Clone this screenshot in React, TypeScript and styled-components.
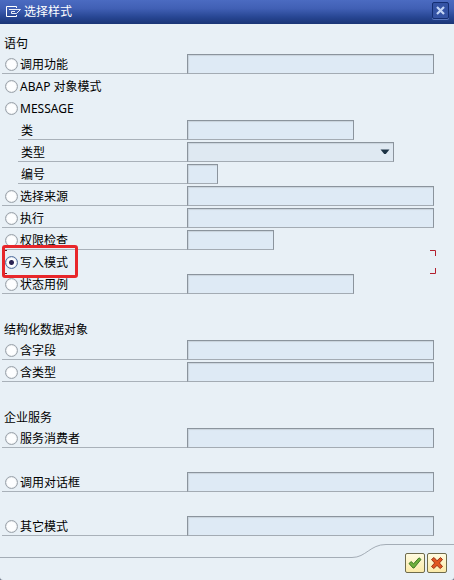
import React, { useState } from 'react';
import styled, { createGlobalStyle, css } from 'styled-components';

const GlobalStyle = createGlobalStyle`
  * {
    box-sizing: border-box;
  }

  body {
    margin: 0;
    background: #6d7686;
  }

  body, input, select, button {
    font-family: "Noto Sans", "Noto Sans CJK SC", sans-serif;
    font-size: 12px;
    line-height: 18px;
    color: #000;
  }
`;

const Dialog = styled.form`
  display: flex;
  flex-direction: column;
  min-height: 100vh;
  background: #e8f0f6;
  border-radius: 0 0 3px 3px;
`;

const TitleBar = styled.header`
  display: flex;
  align-items: center;
  gap: 2px;
  height: 24px;
  padding: 0 5px;
  background: linear-gradient(#4b6bc1 0%, #4160b5 35%, #284794 70%, #1a3576 100%);
`;

const Title = styled.h1`
  flex: 1;
  margin: 0;
  font-size: 12px;
  font-weight: 400;
  line-height: 20px;
  color: #fff;
`;

const CloseButton = styled.button`
  display: flex;
  align-items: center;
  justify-content: center;
  width: 17px;
  height: 17px;
  margin: 0 0 4px;
  padding: 0;
  border: 1px solid #142e72;
  border-radius: 2px;
  background: #3453a4;
  box-shadow: 0 1px 0 #5876bd;
`;

const Content = styled.main`
  flex: 1;
  padding: 6px 20px 8px 2px;
`;

const Group = styled.fieldset`
  min-width: 0;
  margin: 0 0 22px;
  padding: 0;
  border: 0;

  &:last-child {
    margin-bottom: 0;
  }
`;

const GroupTitle = styled.legend`
  height: 22px;
  padding: 5px 2px 0;
  line-height: 17px;
`;

const Row = styled.div`
  position: relative;
  display: flex;
  align-items: flex-end;
  height: 22px;
`;

const LabelCell = styled.div<{ $indent?: boolean; $ruled?: boolean }>`
  display: flex;
  align-items: flex-start;
  flex: none;
  width: ${(p) => (p.$indent ? 169 : 185)}px;
  height: 22px;
  margin-left: ${(p) => (p.$indent ? 16 : 0)}px;
  padding: 4px 0 0 ${(p) => (p.$indent ? 3 : 0)}px;
  border-bottom: 1px solid ${(p) => (p.$ruled ? '#a9b1b9' : 'transparent')};
`;

const ChoiceLabel = styled.label`
  display: flex;
  align-items: flex-start;
  gap: 2px;
  padding-left: 3px;
  white-space: nowrap;
`;

const Radio = styled.input`
  appearance: none;
  flex: none;
  width: 13px;
  height: 13px;
  margin: 2px 0 0;
  border: 1px solid #9aa2aa;
  border-radius: 50%;
  background: #fdfeff;
  box-shadow: inset 0 0 1px #9aa2aa;

  &:checked {
    border-color: #54719f;
    background: radial-gradient(circle, #2a2352 0 2px, #fdfeff 3px);
    box-shadow: inset 0 0 1px #54719f;
  }
`;

const fieldLook = css`
  height: 20px;
  margin: 0;
  padding: 0 4px;
  border: 1px solid #8b949d;
  border-bottom-color: #a3abb3;
  border-radius: 0;
  background: #deeaf5;
  box-shadow: inset 1px 1px 1px #c9d3dc;
  outline: none;
`;

const TextField = styled.input<{ $width?: number }>`
  ${fieldLook}
  min-width: 0;
  ${(p) => (p.$width ? `width: ${p.$width}px;` : 'flex: 1;')}
`;

const SelectBox = styled.div`
  position: relative;
  display: flex;
  width: 207px;

  svg {
    position: absolute;
    top: 7px;
    right: 4px;
    pointer-events: none;
  }
`;

const Select = styled.select`
  ${fieldLook}
  appearance: none;
  flex: 1;
  background: #dfe9f2;
`;

const FocusMarks = styled.svg<{ $side: 'left' | 'right' }>`
  position: absolute;
  top: 0;
  ${(p) => (p.$side === 'left' ? 'left: 2px;' : 'right: -2px;')}
  pointer-events: none;
`;

const Highlight = styled.div`
  position: absolute;
  top: -5px;
  left: 0;
  width: 76px;
  height: 33px;
  border: 3px solid #e8262a;
  border-radius: 3px;
  pointer-events: none;
`;

const Footer = styled.footer`
  display: flex;
  height: 36px;
`;

const FooterEdge = styled.div`
  flex: 1;
  margin-top: 13px;
  border-top: 1px solid #a4adb6;
`;

const FooterCurve = styled.svg`
  flex: none;
`;

const Actions = styled.div`
  display: flex;
  gap: 2px;
  padding: 8px 7px 0 19px;
  border-top: 1px solid #a4adb6;
`;

const ActionButton = styled.button`
  display: flex;
  align-items: center;
  justify-content: center;
  width: 20px;
  height: 20px;
  padding: 0;
  border: 1px solid #6f6b4c;
  border-radius: 2px;
  background: linear-gradient(#fffbe0, #fbeaa8);
`;

type Item = {
  id: string;
  label: string;
  choice?: boolean;
  field?: 'text' | 'select';
  width?: number;
};

const statements: Item[] = [
  { id: 'function', label: '调用功能', choice: true, field: 'text' },
  { id: 'object', label: 'ABAP 对象模式', choice: true },
  { id: 'message', label: 'MESSAGE', choice: true },
  { id: 'class', label: '类', field: 'text', width: 167 },
  { id: 'type', label: '类型', field: 'select' },
  { id: 'number', label: '编号', field: 'text', width: 31 },
  { id: 'select', label: '选择来源', choice: true, field: 'text' },
  { id: 'perform', label: '执行', choice: true, field: 'text' },
  { id: 'authority', label: '权限检查', choice: true, field: 'text', width: 87 },
  { id: 'write', label: '写入模式', choice: true },
  { id: 'case', label: '状态用例', choice: true, field: 'text', width: 167 },
];

const structures: Item[] = [
  { id: 'fields', label: '含字段', choice: true, field: 'text' },
  { id: 'types', label: '含类型', choice: true, field: 'text' },
];

const services: Item[] = [
  { id: 'consumer', label: '服务消费者', choice: true, field: 'text' },
];

const dialogs: Item[] = [
  { id: 'dialog', label: '调用对话框', choice: true, field: 'text' },
];

const others: Item[] = [
  { id: 'other', label: '其它模式', choice: true, field: 'text' },
];

export default function App() {
  const [selected, setSelected] = useState('write');

  const renderItem = (item: Item) => (
    <Row key={item.id}>
      <LabelCell $indent={!item.choice} $ruled={!!item.field}>
        {item.choice ? (
          <ChoiceLabel>
            <Radio
              type="radio"
              name="pattern"
              value={item.id}
              checked={selected === item.id}
              onChange={() => setSelected(item.id)}
            />
            {item.label}
          </ChoiceLabel>
        ) : (
          <label htmlFor={`field-${item.id}`}>{item.label}</label>
        )}
      </LabelCell>
      {item.field === 'text' && (
        <TextField
          id={`field-${item.id}`}
          type="text"
          aria-label={item.label}
          $width={item.width}
        />
      )}
      {item.field === 'select' && (
        <SelectBox>
          <Select id={`field-${item.id}`} defaultValue="">
            <option value="" />
          </Select>
          <svg width="10" height="6" viewBox="0 0 10 6" aria-hidden="true">
            <path d="M0.5 0.5h9L5.8 5H4.2z" fill="#1d3345" />
          </svg>
        </SelectBox>
      )}
      {item.id === 'write' && (
        <>
          <FocusMarks $side="left" width="3" height="24" viewBox="0 0 3 24" aria-hidden="true">
            <path d="M0 0.5H3M0 23.5H3" fill="none" stroke="#6b1a22" />
          </FocusMarks>
          <FocusMarks $side="right" width="6" height="24" viewBox="0 0 6 24" aria-hidden="true">
            <path d="M0 0.5H5.5V6M5.5 18V23.5H0" fill="none" stroke="#b3202e" />
          </FocusMarks>
          <Highlight />
        </>
      )}
    </Row>
  );

  return (
    <>
      <GlobalStyle />
      <Dialog onSubmit={(e) => e.preventDefault()}>
        <TitleBar>
          <svg width="17" height="14" viewBox="0 0 17 14" fill="none" stroke="#fff" aria-hidden="true">
            <path d="M11.5 3V1.5H1.5V11.5H11.5V10" />
            <path d="M4 4.5H15.5L11.5 8.5H6.5V6.5H10" strokeWidth="0.9" />
          </svg>
          <Title>选择样式</Title>
          <CloseButton type="button" aria-label="关闭">
            <svg width="9" height="9" viewBox="0 0 9 9" aria-hidden="true">
              <path d="M1 1L8 8M8 1L1 8" stroke="#c3d5f6" strokeWidth="2.2" />
            </svg>
          </CloseButton>
        </TitleBar>
        <Content>
          <Group>
            <GroupTitle>语句</GroupTitle>
            {statements.map(renderItem)}
          </Group>
          <Group>
            <GroupTitle>结构化数据对象</GroupTitle>
            {structures.map(renderItem)}
          </Group>
          <Group>
            <GroupTitle>企业服务</GroupTitle>
            {services.map(renderItem)}
          </Group>
          <Group>{dialogs.map(renderItem)}</Group>
          <Group>{others.map(renderItem)}</Group>
        </Content>
        <Footer>
          <FooterEdge />
          <FooterCurve width="34" height="14" viewBox="0 0 34 14" aria-hidden="true">
            <path d="M0 13.5C14 13.5 18 0.5 34 0.5" fill="none" stroke="#a4adb6" />
          </FooterCurve>
          <Actions>
            <ActionButton type="submit" aria-label="继续">
              <svg width="14" height="14" viewBox="0 0 14 14" aria-hidden="true">
                <path
                  d="M1 7.5L3.2 5.6L5.6 7.8L11 1.8L13 3.4L6 12H5Z"
                  fill="#6fb03c"
                  stroke="#3f7a25"
                  strokeLinejoin="round"
                />
              </svg>
            </ActionButton>
            <ActionButton type="button" aria-label="取消">
              <svg width="14" height="14" viewBox="0 0 14 14" aria-hidden="true">
                <path
                  d="M1.5 3.5L4 1.5L7 4.8L10.5 1.5L12.5 3.5L9.4 7L12.5 10.5L10.2 12.5L7 9.4L3.8 12.5L1.5 10.5L4.7 7Z"
                  fill="#e0561f"
                  stroke="#9c3216"
                  strokeLinejoin="round"
                />
              </svg>
            </ActionButton>
          </Actions>
        </Footer>
      </Dialog>
    </>
  );
}
